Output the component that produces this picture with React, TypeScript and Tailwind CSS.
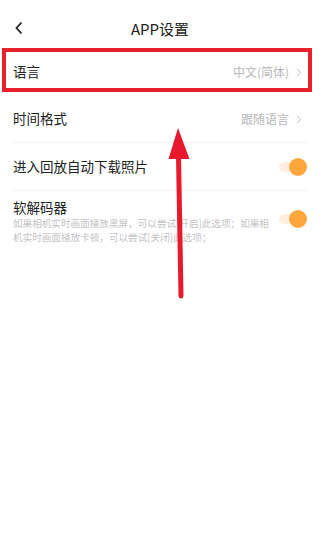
import React from "react";

function Toggle() {
  return (
    <div className="relative w-[28px] h-[18px] shrink-0 flex items-center">
      <div className="w-[24px] h-[10px] rounded-full bg-[#fdefdf]" />
      <div className="absolute right-0 top-0 w-[18px] h-[18px] rounded-full bg-[#ffa63c]" />
    </div>
  );
}

function Chevron() {
  return (
    <svg width="6" height="9" viewBox="0 0 6 9" className="ml-[7px]">
      <path d="M1 1 L4.5 4.5 L1 8" fill="none" stroke="#bdbdbd" strokeWidth="1" />
    </svg>
  );
}

export default function App() {
  return (
    <div
      className="relative w-[320px] h-[551px] bg-white overflow-hidden text-[#222]"
      style={{ fontFamily: '"Noto Sans CJK SC", "Noto Sans", sans-serif' }}
    >
      <div className="relative h-[48px] pt-[8px] flex items-center justify-center">
        <svg width="10" height="14" viewBox="0 0 10 14" className="absolute left-[14px] top-[21px]">
          <path d="M7.5 1.5 L2.5 7 L7.5 12.5" fill="none" stroke="#222" strokeWidth="1.8" />
        </svg>
        <span className="text-[15px] leading-none">APP设置</span>
      </div>

      <div className="mx-[2px] w-[310px] h-[44px] border-[4px] border-[#e8212d] flex items-center justify-between pl-[7px] pr-[6px] pt-[4px]">
        <span className="text-[13.5px] leading-none">语言</span>
        <div className="flex items-center">
          <span className="text-[12px] leading-none text-[#b8b8b8]">中文(简体)</span>
          <Chevron />
        </div>
      </div>

      <div className="mx-[13px]">
        <div className="h-[50px] pt-[4px] flex items-center justify-between">
          <span className="text-[13.5px] leading-none">时间格式</span>
          <div className="flex items-center pr-[5px]">
            <span className="text-[12px] leading-none text-[#b8b8b8]">跟随语言</span>
            <Chevron />
          </div>
        </div>
        <div className="h-px bg-[#f3f3f3]" />
        <div className="h-[47px] flex items-center justify-between">
          <span className="text-[13.5px] leading-none">进入回放自动下载照片</span>
          <Toggle />
        </div>
        <div className="h-px bg-[#f3f3f3]" />
        <div className="flex items-start justify-between pt-[8px]">
          <div className="w-[258px]">
            <div className="text-[13.5px] leading-[17px]">软解码器</div>
            <div className="text-[9.6px] leading-[14px] text-[#c4c4c4] mt-[0px]">
              如果相机实时画面播放黑屏，可以尝试[开启]此选项；如果相机实时画面播放卡顿，可以尝试[关闭]此选项；
            </div>
          </div>
          <div className="pt-[11px]">
            <Toggle />
          </div>
        </div>
      </div>

      <svg
        width="320"
        height="551"
        viewBox="0 0 320 551"
        className="absolute left-0 top-0 pointer-events-none"
      >
        <path d="M181 296 L178.5 156" stroke="#e8192c" strokeWidth="5" strokeLinecap="round" fill="none" />
        <polygon points="178,128 168.5,159 189.5,159" fill="#e8192c" />
      </svg>
    </div>
  );
}
